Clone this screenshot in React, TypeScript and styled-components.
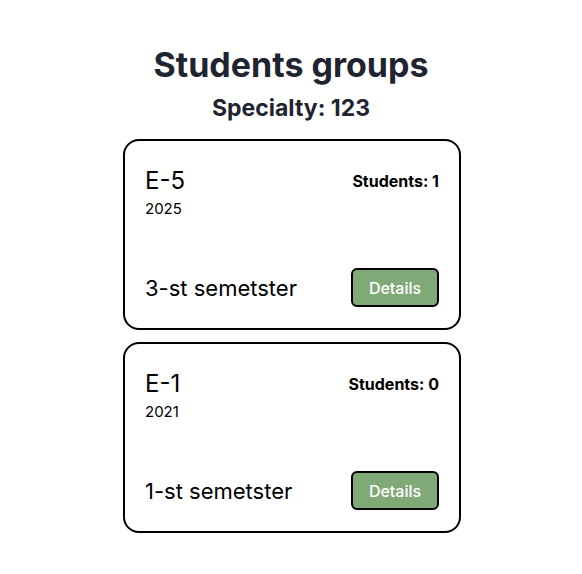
import * as React from 'react'
import styled, { createGlobalStyle } from 'styled-components'

const GlobalStyle = createGlobalStyle`
    * { box-sizing: border-box; }
    body {
        margin: 0;
        background: #ffffff;
        font-family: Inter, "Noto Sans", sans-serif;
        line-height: 1.5;
    }
`

const StyledPage = styled.div`
    display: flex;
    flex-direction: column;
    align-items: center;
    padding-top: 45px;
`
const StyledTitle = styled.h1`
    margin: 0;
    font-size: 34px;
    line-height: 40px;
    font-weight: 700;
    color: #1f2430;
`
const StyledSubtitle = styled.h2`
    margin: 7px 0 15px;
    font-size: 23px;
    line-height: 32px;
    font-weight: 700;
    color: #1f2430;
`
const StyledList = styled.div`
    display: flex;
    flex-direction: column;
    gap: 12px;
    width: 338px;
    margin-left: 2px;
`
const StyledCard = styled.div`
    height: 191px;
    border: 2px solid #000;
    border-radius: 16px;
    padding: 22px 20px 21px;
    display: flex;
    flex-direction: column;
    justify-content: space-between;
    color: #000;
`
const StyledRow = styled.div<{ $align?: string }>`
    display: flex;
    justify-content: space-between;
    align-items: ${p => p.$align || 'center'};
`
const StyledName = styled.div`
    font-size: 24px;
    line-height: 36px;
`
const StyledYear = styled.div`
    font-size: 15px;
    line-height: 20px;
`
const StyledCount = styled.div`
    font-size: 16px;
    font-weight: 700;
    line-height: 24px;
    padding-top: 6px;
`
const StyledSemester = styled.div`
    font-size: 22px;
    line-height: 30px;
`
const StyledButton = styled.button`
    width: 88px;
    height: 39px;
    border: 2px solid #000;
    border-radius: 6px;
    background: #7faa78;
    color: #fff;
    font-family: inherit;
    font-size: 16px;
    font-weight: 500;
    cursor: pointer;
`

const groups = [
    { name: 'E-5', year: 2025, students: 1, semester: '3-st semetster' },
    { name: 'E-1', year: 2021, students: 0, semester: '1-st semetster' },
]

export default function App() {
    return (
        <>
            <GlobalStyle />
            <StyledPage>
                <StyledTitle>Students groups</StyledTitle>
                <StyledSubtitle>Specialty: 123</StyledSubtitle>
                <StyledList>
                    {groups.map(g => (
                        <StyledCard key={g.name}>
                            <StyledRow $align='flex-start'>
                                <div>
                                    <StyledName>{g.name}</StyledName>
                                    <StyledYear>{g.year}</StyledYear>
                                </div>
                                <StyledCount>Students: {g.students}</StyledCount>
                            </StyledRow>
                            <StyledRow>
                                <StyledSemester>{g.semester}</StyledSemester>
                                <StyledButton>Details</StyledButton>
                            </StyledRow>
                        </StyledCard>
                    ))}
                </StyledList>
            </StyledPage>
        </>
    )
}
